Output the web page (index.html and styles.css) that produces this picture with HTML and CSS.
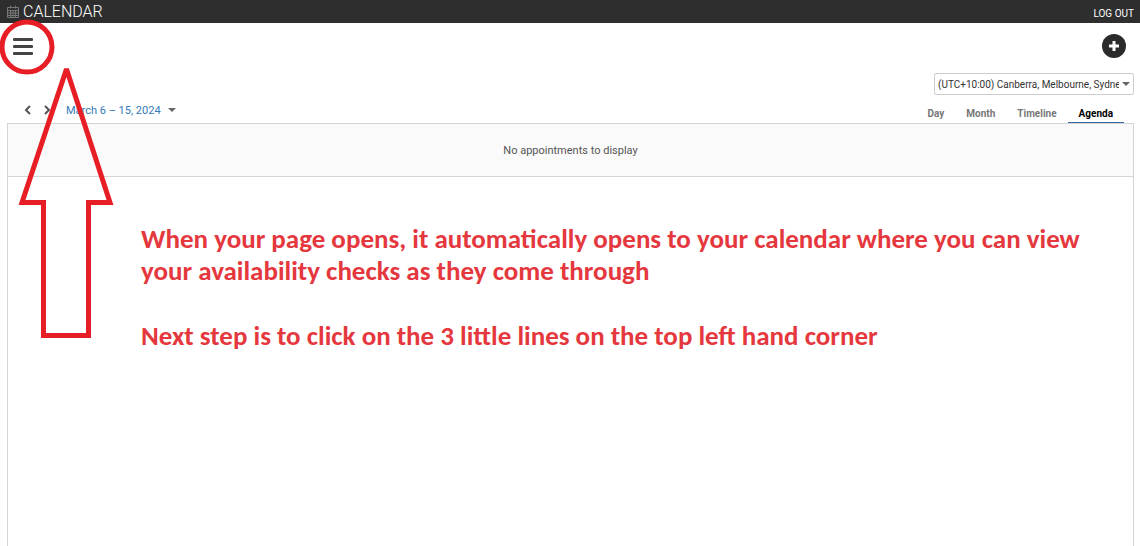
FILE: index.html
```html
<!DOCTYPE html>
<html lang="en">
<head>
    <meta charset="UTF-8">
    <meta name="viewport" content="width=device-width, initial-scale=1">
    <title>Calendar</title>
    <link rel="stylesheet" href="styles.css">
</head>
<body>
    <header class="header">
        <h1 class="header-title">
            <svg class="calendar-icon" viewBox="0 0 12 13" aria-hidden="true">
                <path d="M.5 2.5h11v10H.5zM.5 5.5h11M.5 8h11M.5 10.5h11M3.5 5.5v7M6 5.5v7M8.500 5.500v7M3.500.5v3M8.500.5v3" />
            </svg>
            CALENDAR
        </h1>
        <a class="logout" href="#">LOG OUT</a>
    </header>
    <div class="toolbar">
        <button class="menu-button" type="button" aria-label="Menu">
            <span></span>
            <span></span>
            <span></span>
        </button>
        <button class="add-button" type="button" aria-label="Add">
            <svg viewBox="0 0 24 24" aria-hidden="true">
                <path d="M12 7v10M7 12h10" />
            </svg>
        </button>
    </div>
    <main class="content">
        <div class="timezone">
            <select class="timezone-select" aria-label="Time zone">
                <option>(UTC+10:00) Canberra, Melbourne, Sydney</option>
            </select>
            <span class="caret timezone-caret"></span>
        </div>
        <div class="scheduler-bar">
            <div class="date-nav">
                <button class="nav-button" type="button" aria-label="Previous">
                    <svg viewBox="0 0 8 10" aria-hidden="true"><path d="M6 1L2 5l4 4" /></svg>
                </button>
                <button class="nav-button" type="button" aria-label="Next">
                    <svg viewBox="0 0 8 10" aria-hidden="true"><path d="M2 1l4 4-4 4" /></svg>
                </button>
                <button class="date-button" type="button">March 6 – 15, 2024 <span class="caret"></span></button>
            </div>
            <nav class="views">
                <a href="#">Day</a>
                <a href="#">Month</a>
                <a href="#">Timeline</a>
                <a class="active" href="#">Agenda</a>
            </nav>
        </div>
        <section class="agenda">
            <div class="agenda-empty">No appointments to display</div>
            <div class="instructions">
                <p>When your page opens, it automatically opens to your calendar where you can view your availability checks as they come through</p>
                <p>Next step is to click on the 3 little lines on the top left hand corner</p>
            </div>
        </section>
    </main>
    <!-- Circle around the menu button and the arrow to it -->
    <svg class="pointer" viewBox="0 0 120 345" aria-hidden="true">
        <circle cx="27" cy="47" r="25" />
        <path d="M66.500 69L22 202.500h21.500v133h45v-133H110z" />
    </svg>
</body>
</html>
```

FILE: styles.css
```css
* {
    box-sizing: border-box;
}

html, body {
    height: 100%;
}

body {
    display: flex;
    flex-direction: column;
    margin: 0;
    background-color: #fff;
    font-family: Roboto, "Liberation Sans", sans-serif;
    font-size: 11px;
    color: #555;
    overflow: hidden;
}

button {
    padding: 0;
    border: none;
    background: none;
    font: inherit;
    cursor: pointer;
}

a {
    text-decoration: none;
}

.header {
    display: flex;
    justify-content: space-between;
    align-items: center;
    height: 23px;
    padding: 0 6px 0 7px;
    background-color: #2e2e2e;
}

.header-title {
    display: flex;
    align-items: center;
    gap: 4px;
    margin: 0;
    font-size: 16px;
    font-weight: 300;
    line-height: 23px;
    color: #fff;
}

.calendar-icon {
    width: 12px;
    height: 13px;
    fill: none;
    stroke: #777;
}

.logout {
    padding-top: 4px;
    font-size: 10px;
    color: #fff;
}

.toolbar {
    display: flex;
    justify-content: space-between;
    align-items: center;
    height: 46px;
    padding: 0 14px 0 13px;
}

.menu-button {
    display: flex;
    flex-direction: column;
    gap: 4px;
    width: 20px;
}

.menu-button span {
    height: 3px;
    border-radius: 1px;
    background-color: #444;
}

.add-button {
    width: 24px;
    height: 24px;
    border-radius: 50%;
    background-color: #2b2b2b;
}

.add-button svg {
    display: block;
    fill: none;
    stroke: #fff;
    stroke-width: 3;
}

.content {
    display: flex;
    flex: 1;
    flex-direction: column;
    padding: 4px 6px 0 7px;
}

.caret {
    display: inline-block;
    border: 4px solid transparent;
    border-top-color: #666;
    border-bottom: none;
}

.timezone {
    position: relative;
    align-self: flex-end;
    width: 200px;
}

.timezone-select {
    display: block;
    width: 100%;
    height: 22px;
    padding: 0 14px 0 3px;
    appearance: none;
    border: 1px solid #ccc;
    border-radius: 2px;
    background-color: #fff;
    font-family: inherit;
    font-size: 10px;
    color: #333;
}

.timezone-caret {
    position: absolute;
    top: 9px;
    right: 4px;
    pointer-events: none;
}

.scheduler-bar {
    display: flex;
    justify-content: space-between;
    align-items: flex-end;
    height: 28px;
}

.date-nav {
    display: flex;
    align-items: center;
    height: 28px;
    padding: 2px 0 0 17px;
}

.nav-button {
    width: 8px;
    height: 10px;
    margin-right: 11px;
}

.nav-button svg {
    display: block;
    fill: none;
    stroke: #555;
    stroke-width: 2;
}

.date-button {
    display: flex;
    align-items: center;
    gap: 7px;
    padding-left: 4px;
    color: #337ab7;
}

.views {
    display: flex;
    margin-right: 10px;
}

.views a {
    padding: 0 11px;
    border-bottom: 1px solid transparent;
    font-size: 10px;
    font-weight: 700;
    line-height: 16px;
    color: #777;
}

.views .active {
    border-color: #31689b;
    color: #000;
}

.agenda {
    flex: 1;
    border: 1px solid #d5d5d5;
    border-bottom: none;
}

.agenda-empty {
    padding-top: 2px;
    border-bottom: 1px solid #d5d5d5;
    background-color: #fafafa;
    line-height: 50px;
    text-align: center;
}

.instructions {
    padding: 46px 40px 0 133px;
    font-family: Carlito, Lato, sans-serif;
    font-size: 27px;
    font-weight: 700;
    line-height: 32px;
    color: #e5383e;
}

.instructions p {
    margin: 0 0 33px;
}

.pointer {
    position: absolute;
    top: 0;
    left: 0;
    width: 120px;
    height: 345px;
    fill: none;
    stroke: #e81e26;
    stroke-width: 5;
    stroke-miterlimit: 3;
    pointer-events: none;
}
```
